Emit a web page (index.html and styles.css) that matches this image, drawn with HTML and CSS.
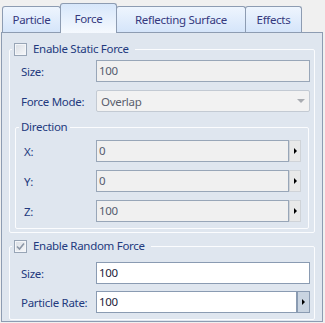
FILE: index.html
```html
<!DOCTYPE html>
<html lang="en">
<head>
    <meta charset="UTF-8">
    <title>Force Settings</title>
    <link rel="stylesheet" href="styles.css">
</head>
<body>
    <div class="window">
        <div class="tabs">
            <div class="tab">Particle</div>
            <div class="tab active">Force</div>
            <div class="tab">Reflecting Surface</div>
            <div class="tab">Effects</div>
        </div>

        <div class="panel">
            <!-- static force -->
            <fieldset class="group">
                <legend class="groupTitle">
                    <span class="check"></span>Enable Static Force
                </legend>
                <div class="rows">
                    <label>Size:</label>
                    <div class="field disabled">100</div>
                    <label>Force Mode:</label>
                    <div class="combo">Overlap<span class="comboArrow"></span></div>
                </div>

                <fieldset class="group direction">
                    <legend class="dirTitle">Direction</legend>
                    <div class="rows dirRows">
                        <label>X:</label>
                        <div class="spin">
                            <div class="field disabled">0</div>
                            <div class="spinBtn"><span class="tri"></span></div>
                        </div>
                        <label>Y:</label>
                        <div class="spin">
                            <div class="field disabled">0</div>
                            <div class="spinBtn"><span class="tri"></span></div>
                        </div>
                        <label>Z:</label>
                        <div class="spin">
                            <div class="field disabled">100</div>
                            <div class="spinBtn"><span class="tri"></span></div>
                        </div>
                    </div>
                </fieldset>
            </fieldset>

            <!-- random force -->
            <fieldset class="group random">
                <legend class="groupTitle">
                    <span class="check checked">
                        <svg width="9" height="9" viewBox="0 0 9 9"><path d="M1 4.5 L3.5 7 L8 1.5" fill="none" stroke="#8b96a6" stroke-width="1.6"/></svg>
                    </span>Enable Random Force
                </legend>
                <div class="rows randomRows">
                    <label>Size:</label>
                    <div class="field">100</div>
                    <label>Particle Rate:</label>
                    <div class="spin">
                        <div class="field">100</div>
                        <div class="spinBtn active"><span class="tri"></span></div>
                    </div>
                </div>
            </fieldset>
        </div>
    </div>
</body>
</html>
```

FILE: styles.css
```css
body {
    margin: 0;
    background-color: #f0f0f0;
    font-family: "Noto Sans", "Open Sans", sans-serif;
    font-size: 11.5px;
    letter-spacing: -0.3px;
    color: #233a7e;
}
.window {
    padding: 3px 2px 1px 1px;
}
.tabs {
    display: flex;
    align-items: flex-end;
    height: 29px;
    padding-left: 1px;
}
.tab {
    box-sizing: border-box;
    height: 26px;
    margin-left: -1px;
    border: 1px solid #8d9cb2;
    border-bottom: none;
    border-radius: 3px 3px 0 0;
    background: linear-gradient(#eef5fe, #d5e5fa);
    color: #35397e;
    display: flex;
    align-items: center;
    justify-content: center;
}
.tab:nth-child(1) { margin-left: 0; width: 59px; }
.tab:nth-child(2) { width: 57px; }
.tab:nth-child(3) { width: 130px; }
.tab:nth-child(4) { width: 57px; }
.tab.active {
    height: 30px;
    margin-bottom: -1px;
    background: linear-gradient(#d7e7fb, #f5f9fe);
    position: relative;
    z-index: 1;
}
.panel {
    border: 1px solid #8d9cb2;
    background-color: #dfe6ef;
    padding: 0 7px 1px 7px;
}
.group {
    margin: 8px 0 0 0;
    padding: 3px 4px 3px 11px;
    border: 1px solid #fbfcfe;
    border-radius: 2px;
    min-inline-size: 0;
}
.groupTitle {
    display: flex;
    align-items: center;
    gap: 6px;
    height: 16px;
    line-height: 16px;
    margin-left: -9px;
    padding: 0 6px 0 2px;
}
.check {
    box-sizing: border-box;
    width: 13px;
    height: 13px;
    border: 1px solid #98a5b6;
    background: linear-gradient(135deg, #d9dee5, #f7f8fa);
    box-shadow: inset 0 0 0 1px #f4f6f9;
    display: flex;
    align-items: center;
    justify-content: center;
}
.rows {
    display: grid;
    grid-template-columns: 75px 1fr;
    row-gap: 8px;
    align-items: center;
}
.field, .combo {
    box-sizing: border-box;
    height: 22px;
    line-height: 19px;
    padding-left: 2px;
    border: 1px solid #8a9bb2;
    background-color: #fff;
    color: #1c1c3a;
}
.field.disabled {
    background-color: #f0f0f0;
    border-color: #98a6b8;
    color: #555c6e;
}
.combo {
    display: flex;
    justify-content: space-between;
    align-items: center;
    padding-left: 4px;
    padding-right: 4px;
    background-color: #f2f2f2;
    border-color: #c3cad3;
    border-radius: 2px;
    color: #5a5f6e;
}
.comboArrow {
    width: 0;
    height: 0;
    border-left: 4px solid transparent;
    border-right: 4px solid transparent;
    border-top: 4px solid #a9acb1;
}
.direction {
    margin: 7px 1px 0 -6px;
    padding: 5px 7px 6px 8px;
}
.dirTitle {
    margin-left: -5px;
    padding: 0 3px 0 2px;
    height: 16px;
    line-height: 16px;
}
.dirRows {
    grid-template-columns: 72px 1fr;
}
.spin {
    display: flex;
}
.spin .field {
    flex: 1;
}
.spinBtn {
    box-sizing: border-box;
    width: 12px;
    height: 22px;
    border: 1px solid #cfd3d8;
    background-color: #e9e9e9;
    display: flex;
    align-items: center;
    justify-content: center;
}
.spinBtn.active {
    width: 13px;
    border-color: #8a9bb2;
    background-color: #c9d4e1;
}
.tri {
    width: 0;
    height: 0;
    border-left: 3px solid #000;
    border-top: 3px solid transparent;
    border-bottom: 3px solid transparent;
}
.random {
    margin-top: 5px;
    padding-top: 8px;
    padding-bottom: 6px;
}
.randomRows {
    row-gap: 7px;
}
```
